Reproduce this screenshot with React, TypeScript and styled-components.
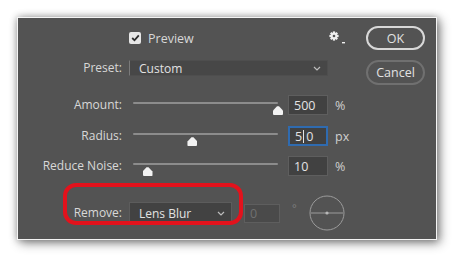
import React from 'react'
import styled, { createGlobalStyle } from 'styled-components'

const GlobalStyle = createGlobalStyle`
  html, body {
    margin: 0;
    background: #ffffff;
  }
  body {
    font-family: 'Open Sans', 'Noto Sans', sans-serif;
  }
`

const Page = styled.div`
  padding: 17px 0 0 17px;
  width: 455px;
  height: 258px;
  box-sizing: border-box;
`

const Dialog = styled.div`
  width: 420px;
  height: 223px;
  box-sizing: border-box;
  border: 1px solid #f4f4f4;
  background: #535353;
  box-shadow: 3px 3px 10px rgba(0, 0, 0, 0.45), 0 0 7px rgba(0, 0, 0, 0.28);
  display: flex;
  color: #d8d8d8;
  font-size: 12px;
`

const Main = styled.div`
  display: flex;
  flex-direction: column;
  padding-top: 8px;
  width: 341px;
`

const Row = styled.div<{ $gap?: number; $h: number }>`
  position: relative;
  display: grid;
  grid-template-columns: 104px 152px 40px 1fr;
  column-gap: 7px;
  align-items: center;
  height: ${p => p.$h}px;
  margin-top: ${p => p.$gap ?? 0}px;
`

const Label = styled.div`
  text-align: right;
  white-space: nowrap;
  line-height: 1;
`

const PreviewLine = styled.div`
  grid-column: 2 / -1;
  display: flex;
  align-items: center;
  justify-content: space-between;
  padding-right: 13px;
`

const CheckLabel = styled.label`
  display: flex;
  align-items: center;
  gap: 7px;
  font-size: 12.5px;
`

const CheckBox = styled.span`
  width: 12px;
  height: 12px;
  border-radius: 2px;
  background: #e6e6e6;
  display: flex;
  align-items: center;
  justify-content: center;
`

const Select = styled.div<{ $w?: number; $h: number; $dark?: boolean }>`
  grid-column: ${p => (p.$w ? 'auto' : '2 / 4')};
  width: ${p => (p.$w ? `${p.$w}px` : 'auto')};
  height: ${p => p.$h}px;
  box-sizing: border-box;
  display: flex;
  align-items: center;
  justify-content: space-between;
  padding: 0 6px 0 9px;
  background: ${p => (p.$dark ? '#424242' : '#474747')};
  border: 1px solid ${p => (p.$dark ? '#5c5c5c' : '#4e4e4e')};
  border-left-color: ${p => (p.$dark ? '#5c5c5c' : '#7a7a7a')};
  color: #e2e2e2;
`

const Slider = styled.div`
  position: relative;
  height: 20px;
`

const Track = styled.div`
  margin: 7px 3px 0 4px;
  height: 2px;
  background: #8c8c8c;
  border-radius: 1px;
`

const Thumb = styled.div`
  position: absolute;
  top: 11px;
  width: 10px;
  height: 9px;
  transform: translateX(-50%);
  background: #f2f2f2;
  border-radius: 1px;
  clip-path: polygon(40% 4%, 60% 4%, 100% 50%, 100% 100%, 0 100%, 0 50%);
`

const Field = styled.div<{ $focus?: boolean; $off?: boolean; $w?: number }>`
  width: ${p => p.$w ?? 40}px;
  height: ${p => (p.$off ? 19 : 20)}px;
  box-sizing: border-box;
  display: flex;
  align-items: center;
  padding-left: 5px;
  background: ${p => (p.$off ? '#4a4a4a' : '#414141')};
  border: ${p => (p.$focus ? '2px solid #2f6bb0' : '1px solid #5e5e5e')};
  color: ${p => (p.$off ? '#707070' : '#e4e4e4')};
  font-size: 12.5px;
`

const Caret = styled.span`
  display: inline-block;
  width: 1px;
  height: 13px;
  margin: 0 2px 0 1px;
  background: #e4e4e4;
`

const Unit = styled.div`
  font-size: 12.5px;
  color: #cfcfcf;
`

const RemoveControls = styled.div`
  grid-column: 2 / -1;
  display: flex;
  align-items: center;
`

const Degree = styled.span`
  margin: -12px 0 0 12px;
  color: #7e7e7e;
  font-size: 11px;
`

const Dial = styled.svg`
  margin-left: 11px;
`

const Highlight = styled.div`
  position: absolute;
  left: 45px;
  top: -11px;
  width: 180px;
  height: 42px;
  box-sizing: border-box;
  border: 4px solid #e3121c;
  border-radius: 13px;
  pointer-events: none;
`

const Buttons = styled.div`
  display: flex;
  flex-direction: column;
  gap: 10px;
  padding-top: 8px;
  margin-left: 7px;
`

const Button = styled.button<{ $primary?: boolean }>`
  width: 59px;
  height: ${p => (p.$primary ? 24 : 25)}px;
  border-radius: 13px;
  border: 2px solid ${p => (p.$primary ? '#d8d8d8' : '#707070')};
  background: #535353;
  color: #e2e2e2;
  font-family: inherit;
  font-size: 12.5px;
  padding: 0;
`

const Chevron = () => (
  <svg width="8" height="5" viewBox="0 0 8 5">
    <polyline points="1,1 4,4 7,1" fill="none" stroke="#bdbdbd" strokeWidth="1.2" />
  </svg>
)

const Gear = () => (
  <svg width="17" height="14" viewBox="0 0 17 14">
    <g transform="translate(5 5)" fill="#efefef">
      {[0, 45, 90, 135].map(a => (
        <rect key={a} x="-1.1" y="-4.6" width="2.2" height="9.2" transform={`rotate(${a})`} />
      ))}
      <circle r="3.4" />
      <circle r="1.3" fill="#535353" />
    </g>
    <rect x="13" y="11" width="3" height="1.4" fill="#efefef" />
  </svg>
)

const TRACK = 145

const SliderRow: React.FC<{
  label: string
  pct: number
  value: React.ReactNode
  unit: string
  gap: number
  focus?: boolean
}> = ({ label, pct, value, unit, gap, focus }) => (
  <Row $h={20} $gap={gap}>
    <Label>{label}</Label>
    <Slider>
      <Track />
      <Thumb style={{ left: 4 + pct * TRACK }} />
    </Slider>
    <Field $focus={focus}>{value}</Field>
    <Unit>{unit}</Unit>
  </Row>
)

export default function App() {
  return (
    <>
      <GlobalStyle />
      <Page>
        <Dialog>
          <Main>
            <Row $h={24}>
              <span />
              <PreviewLine>
                <CheckLabel>
                  <CheckBox>
                    <svg width="9" height="8" viewBox="0 0 9 8">
                      <polyline points="1.2,4 3.5,6.3 7.8,1.3" fill="none" stroke="#2b2b2b" strokeWidth="1.8" />
                    </svg>
                  </CheckBox>
                  Preview
                </CheckLabel>
                <Gear />
              </PreviewLine>
            </Row>
            <Row $h={20} $gap={8}>
              <Label>Preset:</Label>
              <Select $h={16}>
                <span>Custom</span>
                <Chevron />
              </Select>
            </Row>
            <SliderRow label="Amount:" pct={1} value="500" unit="%" gap={17} />
            <SliderRow
              label="Radius:"
              pct={0.41}
              value={<>5<Caret />0</>}
              unit="px"
              gap={11}
              focus
            />
            <SliderRow label="Reduce Noise:" pct={0.1} value="10" unit="%" gap={10} />
            <Row $h={22} $gap={18}>
              <Label>Remove:</Label>
              <RemoveControls>
                <Select $w={103} $h={22} $dark>
                  <span>Lens Blur</span>
                  <Chevron />
                </Select>
                <Field $off $w={36} style={{ marginLeft: 12 }}>0</Field>
                <Degree>°</Degree>
                <Dial width="38" height="38" viewBox="0 0 38 38">
                  <circle cx="19" cy="19" r="17" fill="none" stroke="#9c9c9c" strokeWidth="1" />
                  <line x1="3" y1="19" x2="35" y2="19" stroke="#9c9c9c" strokeWidth="1" />
                  <circle cx="19" cy="19" r="1.6" fill="#b8b8b8" />
                </Dial>
              </RemoveControls>
              <Highlight />
            </Row>
          </Main>
          <Buttons>
            <Button $primary>OK</Button>
            <Button>Cancel</Button>
          </Buttons>
        </Dialog>
      </Page>
    </>
  )
}
